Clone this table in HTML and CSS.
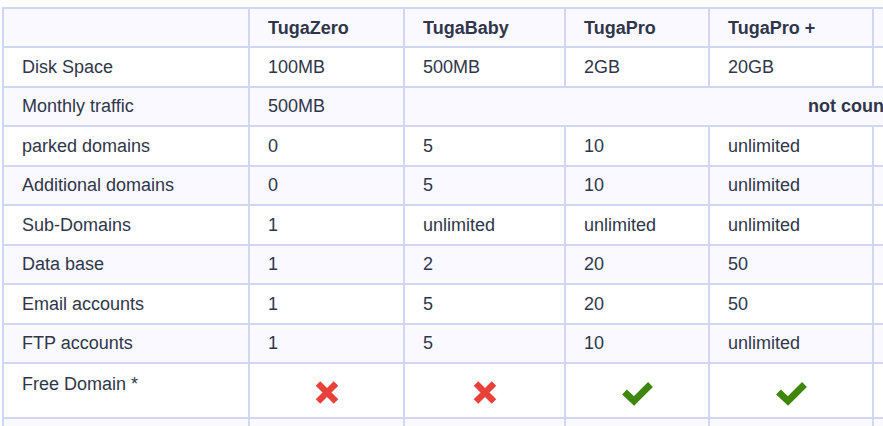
FILE: index.html
```html
<!DOCTYPE html>
<html>
<head>
<meta charset="utf-8">
<link rel="stylesheet" href="styles.css">
</head>
<body>
<table class="plans">
  <colgroup>
    <col class="c-label">
    <col class="c-zero">
    <col class="c-baby">
    <col class="c-pro">
    <col class="c-proplus">
    <col class="c-extra">
  </colgroup>
  <thead>
    <tr class="alt">
      <th></th>
      <th>TugaZero</th>
      <th>TugaBaby</th>
      <th>TugaPro</th>
      <th>TugaPro +</th>
      <th></th>
    </tr>
  </thead>
  <tbody>
    <tr>
      <td>Disk Space</td><td>100MB</td><td>500MB</td><td>2GB</td><td>20GB</td><td></td>
    </tr>
    <tr class="alt">
      <td>Monthly traffic</td><td>500MB</td><td colspan="4" class="span">not counted</td>
    </tr>
    <tr>
      <td>parked domains</td><td>0</td><td>5</td><td>10</td><td>unlimited</td><td></td>
    </tr>
    <tr class="alt">
      <td>Additional domains</td><td>0</td><td>5</td><td>10</td><td>unlimited</td><td></td>
    </tr>
    <tr>
      <td>Sub-Domains</td><td>1</td><td>unlimited</td><td>unlimited</td><td>unlimited</td><td></td>
    </tr>
    <tr class="alt">
      <td>Data base</td><td>1</td><td>2</td><td>20</td><td>50</td><td></td>
    </tr>
    <tr>
      <td>Email accounts</td><td>1</td><td>5</td><td>20</td><td>50</td><td></td>
    </tr>
    <tr class="alt">
      <td>FTP accounts</td><td>1</td><td>5</td><td>10</td><td>unlimited</td><td></td>
    </tr>
    <tr class="icons">
      <td class="top">Free Domain *</td>
      <td class="mark"><svg class="no" width="24" height="25" viewBox="0 0 24 25"><path d="M3 3.5 L21 21.5 M21 3.5 L3 21.5" fill="none" stroke="#e8413a" stroke-width="6.4" stroke-linecap="butt"/></svg></td>
      <td class="mark"><svg class="no" width="24" height="25" viewBox="0 0 24 25"><path d="M3 3.5 L21 21.5 M21 3.5 L3 21.5" fill="none" stroke="#e8413a" stroke-width="6.4" stroke-linecap="butt"/></svg></td>
      <td class="mark"><svg class="yes" width="31" height="27" viewBox="0 0 31 27"><polyline points="2.5,13 12,22 28.5,5.5" fill="none" stroke="#3e870c" stroke-width="6.8" stroke-linecap="butt" stroke-linejoin="miter"/></svg></td>
      <td class="mark"><svg class="yes" width="31" height="27" viewBox="0 0 31 27"><polyline points="2.5,13 12,22 28.5,5.5" fill="none" stroke="#3e870c" stroke-width="6.8" stroke-linecap="butt" stroke-linejoin="miter"/></svg></td>
      <td></td>
    </tr>
    <tr class="alt">
      <td></td><td></td><td></td><td></td><td></td><td></td>
    </tr>
  </tbody>
</table>
</body>
</html>
```

FILE: styles.css
```css
html, body {
  margin: 0;
  padding: 0;
  background: #ffffff;
  overflow: hidden;
}

body {
  font-family: "Liberation Sans", Arial, Helvetica, sans-serif;
  font-size: 18px;
  color: #30364a;
}

.plans {
  border-collapse: collapse;
  table-layout: fixed;
  width: 1312px;
  margin: 7px 0 0 2px;
}

.c-label { width: 246px; }
.c-zero { width: 155px; }
.c-baby { width: 161px; }
.c-pro { width: 144px; }
.c-proplus { width: 164px; }
.c-extra { width: 442px; }

.plans th,
.plans td {
  border: 2px solid #d0d7f2;
  padding: 1px 18px 0;
  height: 39.5px;
  box-sizing: border-box;
  text-align: left;
  vertical-align: middle;
  white-space: nowrap;
  line-height: 21px;
}

.plans th {
  font-weight: bold;
  height: 39px;
}

.plans tr.alt {
  background: #faf9ff;
}

.plans td.span {
  text-align: center;
  font-weight: bold;
}

.plans tr.icons td {
  height: 55px;
}

.plans td.top {
  vertical-align: top;
  padding-top: 10px;
}

.plans td.mark {
  text-align: center;
  padding: 4px 0 0 0;
}

.plans td.mark svg {
  display: inline-block;
  vertical-align: middle;
}
```
